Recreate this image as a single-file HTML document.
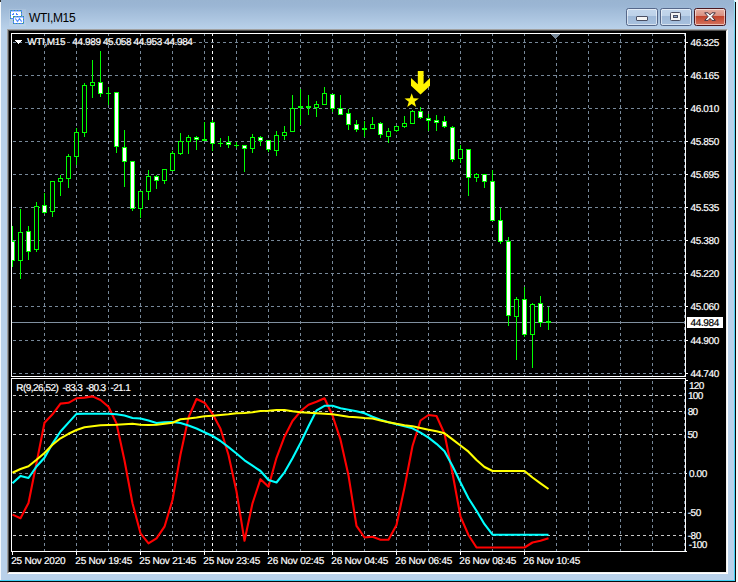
<!DOCTYPE html>
<html><head><meta charset="utf-8"><title>WTI,M15</title>
<style>
html,body{margin:0;padding:0;}
body{width:738px;height:582px;overflow:hidden;position:relative;background:#b9d1ea;font-family:"Liberation Sans",sans-serif;}
#win{position:absolute;left:0;top:0;width:738px;height:582px;overflow:hidden;}
#cap{position:absolute;left:0;top:0;width:735px;height:29px;background:linear-gradient(#99b4d1 0,#9bb6d4 20%,#b9d1ea 100%);}
#lft{position:absolute;left:0;top:0;width:1px;height:581px;background:#f4f8fc;}
#rcy{position:absolute;left:734px;top:1px;width:1px;height:580px;background:linear-gradient(#9be3f8 0,#5fd2f2 40px,#3fd0f5 100%);}
#rbk{position:absolute;left:735px;top:2px;width:1px;height:580px;background:#0a0a0a;}
#rwh{position:absolute;left:736px;top:0;width:2px;height:582px;background:#f6f6f6;}
#rtc{position:absolute;left:734px;top:0;width:2px;height:2px;background:#dff3fb;}
#bcy{position:absolute;left:0;top:580px;width:735px;height:1px;background:#3fd0f5;}
#bbk{position:absolute;left:0;top:581px;width:736px;height:1px;background:#0a0a0a;}
#edge{position:absolute;left:7px;top:29px;width:719px;height:543px;border-top:1px solid #a0a0a0;border-left:1px solid #a0a0a0;border-right:1px solid #fff;border-bottom:1px solid #fff;}
#edge2{position:absolute;left:8px;top:30px;width:717px;height:541px;border-top:1px solid #505050;border-left:1px solid #505050;border-right:1px solid #f0f0f0;border-bottom:1px solid #f0f0f0;background:#000;}
#chart{position:absolute;left:0;top:0;}
#ttl{position:absolute;left:29px;top:11px;font-size:12px;line-height:14px;color:#000;letter-spacing:-0.35px;white-space:nowrap;}
.btn{position:absolute;top:8px;height:16px;border:1px solid #56688a;border-radius:2.5px;box-shadow:inset 0 0 0 1px rgba(255,255,255,.55);}
#bmin,#bmax{background:linear-gradient(#c3d6ec 0,#bdd2e9 43%,#9fb9d8 46%,#a8c1de 100%);}
#bmin{left:626px;width:30px;}
#bmax{left:660px;width:30px;}
#bcls{left:694px;width:30px;border-color:#4b1820;background:linear-gradient(#e6b1a4 0,#d98f80 43%,#c2432b 46%,#d4745f 100%);}
.g{position:absolute;box-sizing:border-box;}
#corner{position:absolute;left:0;top:0;width:1px;height:2px;background:#333;}
</style></head><body>
<div id="win">
<div id="cap"></div>
<div id="lft"></div><div id="corner"></div>
<div id="rwh"></div><div id="rtc"></div><div id="rcy"></div><div id="rbk"></div><div id="bcy"></div><div id="bbk"></div>
<svg style="position:absolute;left:9px;top:9px" width="17" height="17" viewBox="9 9 17 17" shape-rendering="crispEdges">
<rect x="9" y="9" width="17" height="17" fill="#fff" opacity=".10"/>
<rect x="10.5" y="10.5" width="11" height="8" fill="#fff" stroke="#4c88ff"/>
<rect x="10.5" y="10.5" width="11" height="8" fill="none" stroke="#3f9f7c" stroke-dasharray="1 2"/>
<rect x="12" y="14" width="2" height="1" fill="#4c88ff"/><rect x="13" y="13" width="1" height="1" fill="#4c88ff"/>
<rect x="16" y="14" width="2" height="1" fill="#4c88ff"/><rect x="16" y="13" width="1" height="1" fill="#4c88ff"/>
<rect x="11" y="11" width="10" height="1" fill="#4c88ff" opacity=".45"/>
<rect x="13.5" y="16.5" width="10" height="7" fill="#fff" stroke="#4c88ff"/>
<rect x="14" y="17" width="9" height="1" fill="#4c88ff" opacity=".45"/>
<rect x="13.5" y="16.5" width="10" height="7" fill="none" stroke="#3f9f7c" stroke-dasharray="1 2"/>
<polyline points="15.3,18.5 17.5,21.6 19.5,18.6 21.7,21.6" fill="none" stroke="#4c88ff" stroke-width="1.1" shape-rendering="geometricPrecision"/>
</svg>
<div id="ttl">WTI,M15</div>
<div class="btn" id="bmin"><div class="g" style="left:9px;top:7px;width:12px;height:5px;border:1px solid #4a4f63;border-radius:1px;background:#f4f4f4"></div></div>
<div class="btn" id="bmax"><div class="g" style="left:9px;top:3px;width:11px;height:9px;border:1px solid #4a4f63;border-radius:1.5px;background:#f4f4f4"></div><div class="g" style="left:12px;top:6px;width:5px;height:3px;border:1px solid #4a4f63;background:#8fa9cc"></div></div>
<div class="btn" id="bcls"><svg style="position:absolute;left:9px;top:3px" width="12" height="10" viewBox="0 0 12 10"><path d="M0.7 0.8 L4.1 0.8 L6 2.9 L7.9 0.8 L11.3 0.8 L8 4.6 L11.3 8.4 L7.9 8.4 L6 6.3 L4.1 8.4 L0.7 8.4 L4 4.6 Z" fill="#f6f6f6" stroke="#4a3540" stroke-width="1" stroke-linejoin="round"/></svg></div>
<div id="edge"></div><div id="edge2"></div>
<svg id="chart" width="738" height="582" viewBox="0 0 738 582" shape-rendering="crispEdges">
<rect x="9" y="31" width="717" height="541" fill="#000"/>
<g stroke="#778899" stroke-width="1" stroke-dasharray="3 3" fill="none">
<line x1="13" y1="42.5" x2="685" y2="42.5"/>
<line x1="13" y1="75.5" x2="685" y2="75.5"/>
<line x1="13" y1="108.5" x2="685" y2="108.5"/>
<line x1="13" y1="141.5" x2="685" y2="141.5"/>
<line x1="13" y1="174.5" x2="685" y2="174.5"/>
<line x1="13" y1="207.5" x2="685" y2="207.5"/>
<line x1="13" y1="240.5" x2="685" y2="240.5"/>
<line x1="13" y1="273.5" x2="685" y2="273.5"/>
<line x1="13" y1="306.5" x2="685" y2="306.5"/>
<line x1="13" y1="340.5" x2="685" y2="340.5"/>
<line x1="13" y1="373.5" x2="685" y2="373.5"/>
<line x1="13" y1="473.5" x2="685" y2="473.5"/>
<line x1="44.5" y1="33" x2="44.5" y2="551"/>
<line x1="76.5" y1="33" x2="76.5" y2="551"/>
<line x1="108.5" y1="33" x2="108.5" y2="551"/>
<line x1="140.5" y1="33" x2="140.5" y2="551"/>
<line x1="172.5" y1="33" x2="172.5" y2="551"/>
<line x1="204.5" y1="33" x2="204.5" y2="551"/>
<line x1="236.5" y1="33" x2="236.5" y2="551"/>
<line x1="268.5" y1="33" x2="268.5" y2="551"/>
<line x1="300.5" y1="33" x2="300.5" y2="551"/>
<line x1="332.5" y1="33" x2="332.5" y2="551"/>
<line x1="364.5" y1="33" x2="364.5" y2="551"/>
<line x1="396.5" y1="33" x2="396.5" y2="551"/>
<line x1="428.5" y1="33" x2="428.5" y2="551"/>
<line x1="460.5" y1="33" x2="460.5" y2="551"/>
<line x1="492.5" y1="33" x2="492.5" y2="551"/>
<line x1="524.5" y1="33" x2="524.5" y2="551"/>
<line x1="556.5" y1="33" x2="556.5" y2="551"/>
<line x1="588.5" y1="33" x2="588.5" y2="551"/>
<line x1="620.5" y1="33" x2="620.5" y2="551"/>
<line x1="652.5" y1="33" x2="652.5" y2="551"/>
<line x1="684.5" y1="33" x2="684.5" y2="551"/>
</g>
<line x1="13" y1="395.5" x2="685" y2="395.5" stroke="#c8c8c8" stroke-width="1" stroke-dasharray="3 3"/>
<line x1="13" y1="411.5" x2="685" y2="411.5" stroke="#c8c8c8" stroke-width="1" stroke-dasharray="3 3"/>
<line x1="13" y1="434.5" x2="685" y2="434.5" stroke="#c8c8c8" stroke-width="1" stroke-dasharray="3 3"/>
<line x1="13" y1="512.5" x2="685" y2="512.5" stroke="#c8c8c8" stroke-width="1" stroke-dasharray="3 3"/>
<line x1="13" y1="535.5" x2="685" y2="535.5" stroke="#c8c8c8" stroke-width="1" stroke-dasharray="3 3"/>
<line x1="212.5" y1="33" x2="212.5" y2="551" stroke="#ffffff" stroke-width="1" stroke-dasharray="3 3"/>
<rect x="12" y="322" width="673" height="1" fill="#8090a0"/>
<rect x="12" y="226" width="1" height="41" fill="#00ff00"/>
<rect x="10" y="241" width="5" height="20" fill="#00ff00"/>
<rect x="11" y="242" width="3" height="18" fill="#fff"/>
<rect x="20" y="209" width="1" height="70" fill="#00ff00"/>
<rect x="18" y="232" width="5" height="29" fill="#00ff00"/>
<rect x="19" y="233" width="3" height="27" fill="#000"/>
<rect x="28" y="226" width="1" height="34" fill="#00ff00"/>
<rect x="26" y="231" width="5" height="21" fill="#00ff00"/>
<rect x="27" y="232" width="3" height="19" fill="#fff"/>
<rect x="36" y="202" width="1" height="50" fill="#00ff00"/>
<rect x="34" y="206" width="5" height="44" fill="#00ff00"/>
<rect x="35" y="207" width="3" height="42" fill="#000"/>
<rect x="44" y="193" width="1" height="21" fill="#00ff00"/>
<rect x="42" y="205" width="5" height="8" fill="#00ff00"/>
<rect x="43" y="206" width="3" height="6" fill="#fff"/>
<rect x="52" y="181" width="1" height="36" fill="#00ff00"/>
<rect x="50" y="181" width="5" height="31" fill="#00ff00"/>
<rect x="51" y="182" width="3" height="29" fill="#000"/>
<rect x="60" y="175" width="1" height="21" fill="#00ff00"/>
<rect x="58" y="178" width="5" height="4" fill="#00ff00"/>
<rect x="59" y="179" width="3" height="2" fill="#000"/>
<rect x="68" y="154" width="1" height="34" fill="#00ff00"/>
<rect x="66" y="156" width="5" height="23" fill="#00ff00"/>
<rect x="67" y="157" width="3" height="21" fill="#000"/>
<rect x="76" y="128" width="1" height="37" fill="#00ff00"/>
<rect x="74" y="132" width="5" height="25" fill="#00ff00"/>
<rect x="75" y="133" width="3" height="23" fill="#000"/>
<rect x="84" y="83" width="1" height="54" fill="#00ff00"/>
<rect x="82" y="85" width="5" height="48" fill="#00ff00"/>
<rect x="83" y="86" width="3" height="46" fill="#000"/>
<rect x="92" y="60" width="1" height="38" fill="#00ff00"/>
<rect x="90" y="82" width="5" height="4" fill="#00ff00"/>
<rect x="91" y="83" width="3" height="2" fill="#000"/>
<rect x="100" y="51" width="1" height="46" fill="#00ff00"/>
<rect x="98" y="82" width="5" height="12" fill="#00ff00"/>
<rect x="99" y="83" width="3" height="10" fill="#fff"/>
<rect x="108" y="87" width="1" height="18" fill="#00ff00"/>
<rect x="106" y="93" width="5" height="1" fill="#00ff00"/>
<rect x="116" y="92" width="1" height="61" fill="#00ff00"/>
<rect x="114" y="92" width="5" height="55" fill="#00ff00"/>
<rect x="115" y="93" width="3" height="53" fill="#fff"/>
<rect x="124" y="130" width="1" height="57" fill="#00ff00"/>
<rect x="122" y="147" width="5" height="15" fill="#00ff00"/>
<rect x="123" y="148" width="3" height="13" fill="#fff"/>
<rect x="132" y="161" width="1" height="50" fill="#00ff00"/>
<rect x="130" y="161" width="5" height="48" fill="#00ff00"/>
<rect x="131" y="162" width="3" height="46" fill="#fff"/>
<rect x="140" y="191" width="1" height="27" fill="#00ff00"/>
<rect x="138" y="191" width="5" height="18" fill="#00ff00"/>
<rect x="139" y="192" width="3" height="16" fill="#000"/>
<rect x="148" y="170" width="1" height="30" fill="#00ff00"/>
<rect x="146" y="176" width="5" height="16" fill="#00ff00"/>
<rect x="147" y="177" width="3" height="14" fill="#000"/>
<rect x="156" y="175" width="1" height="14" fill="#00ff00"/>
<rect x="154" y="176" width="5" height="5" fill="#00ff00"/>
<rect x="155" y="177" width="3" height="3" fill="#fff"/>
<rect x="164" y="169" width="1" height="15" fill="#00ff00"/>
<rect x="162" y="169" width="5" height="12" fill="#00ff00"/>
<rect x="163" y="170" width="3" height="10" fill="#000"/>
<rect x="172" y="151" width="1" height="20" fill="#00ff00"/>
<rect x="170" y="153" width="5" height="18" fill="#00ff00"/>
<rect x="171" y="154" width="3" height="16" fill="#000"/>
<rect x="180" y="133" width="1" height="22" fill="#00ff00"/>
<rect x="178" y="141" width="5" height="13" fill="#00ff00"/>
<rect x="179" y="142" width="3" height="11" fill="#000"/>
<rect x="188" y="135" width="1" height="19" fill="#00ff00"/>
<rect x="186" y="137" width="5" height="5" fill="#00ff00"/>
<rect x="187" y="138" width="3" height="3" fill="#000"/>
<rect x="196" y="136" width="1" height="14" fill="#00ff00"/>
<rect x="194" y="137" width="5" height="3" fill="#00ff00"/>
<rect x="195" y="138" width="3" height="1" fill="#fff"/>
<rect x="204" y="122" width="1" height="19" fill="#00ff00"/>
<rect x="202" y="139" width="5" height="2" fill="#00ff00"/>
<rect x="212" y="120" width="1" height="31" fill="#00ff00"/>
<rect x="210" y="122" width="5" height="22" fill="#00ff00"/>
<rect x="211" y="123" width="3" height="20" fill="#fff"/>
<rect x="220" y="138" width="1" height="9" fill="#00ff00"/>
<rect x="218" y="143" width="5" height="1" fill="#00ff00"/>
<rect x="228" y="136" width="1" height="12" fill="#00ff00"/>
<rect x="226" y="142" width="5" height="3" fill="#00ff00"/>
<rect x="227" y="143" width="3" height="1" fill="#fff"/>
<rect x="236" y="142" width="1" height="6" fill="#00ff00"/>
<rect x="234" y="145" width="5" height="1" fill="#00ff00"/>
<rect x="244" y="145" width="1" height="27" fill="#00ff00"/>
<rect x="242" y="145" width="5" height="4" fill="#00ff00"/>
<rect x="243" y="146" width="3" height="2" fill="#fff"/>
<rect x="252" y="134" width="1" height="19" fill="#00ff00"/>
<rect x="250" y="137" width="5" height="12" fill="#00ff00"/>
<rect x="251" y="138" width="3" height="10" fill="#000"/>
<rect x="260" y="136" width="1" height="10" fill="#00ff00"/>
<rect x="258" y="137" width="5" height="4" fill="#00ff00"/>
<rect x="259" y="138" width="3" height="2" fill="#fff"/>
<rect x="268" y="140" width="1" height="12" fill="#00ff00"/>
<rect x="266" y="140" width="5" height="10" fill="#00ff00"/>
<rect x="267" y="141" width="3" height="8" fill="#fff"/>
<rect x="276" y="131" width="1" height="25" fill="#00ff00"/>
<rect x="274" y="135" width="5" height="16" fill="#00ff00"/>
<rect x="275" y="136" width="3" height="14" fill="#000"/>
<rect x="284" y="126" width="1" height="14" fill="#00ff00"/>
<rect x="282" y="132" width="5" height="4" fill="#00ff00"/>
<rect x="283" y="133" width="3" height="2" fill="#000"/>
<rect x="292" y="95" width="1" height="37" fill="#00ff00"/>
<rect x="290" y="108" width="5" height="24" fill="#00ff00"/>
<rect x="291" y="109" width="3" height="22" fill="#000"/>
<rect x="300" y="89" width="1" height="36" fill="#00ff00"/>
<rect x="298" y="106" width="5" height="2" fill="#00ff00"/>
<rect x="308" y="95" width="1" height="20" fill="#00ff00"/>
<rect x="306" y="106" width="5" height="2" fill="#00ff00"/>
<rect x="316" y="101" width="1" height="16" fill="#00ff00"/>
<rect x="314" y="104" width="5" height="4" fill="#00ff00"/>
<rect x="315" y="105" width="3" height="2" fill="#000"/>
<rect x="324" y="87" width="1" height="18" fill="#00ff00"/>
<rect x="322" y="93" width="5" height="12" fill="#00ff00"/>
<rect x="323" y="94" width="3" height="10" fill="#000"/>
<rect x="332" y="94" width="1" height="18" fill="#00ff00"/>
<rect x="330" y="94" width="5" height="15" fill="#00ff00"/>
<rect x="331" y="95" width="3" height="13" fill="#fff"/>
<rect x="340" y="95" width="1" height="20" fill="#00ff00"/>
<rect x="338" y="108" width="5" height="7" fill="#00ff00"/>
<rect x="339" y="109" width="3" height="5" fill="#fff"/>
<rect x="348" y="109" width="1" height="21" fill="#00ff00"/>
<rect x="346" y="113" width="5" height="12" fill="#00ff00"/>
<rect x="347" y="114" width="3" height="10" fill="#fff"/>
<rect x="356" y="120" width="1" height="12" fill="#00ff00"/>
<rect x="354" y="124" width="5" height="6" fill="#00ff00"/>
<rect x="355" y="125" width="3" height="4" fill="#fff"/>
<rect x="364" y="121" width="1" height="16" fill="#00ff00"/>
<rect x="362" y="128" width="5" height="2" fill="#00ff00"/>
<rect x="372" y="117" width="1" height="12" fill="#00ff00"/>
<rect x="370" y="124" width="5" height="5" fill="#00ff00"/>
<rect x="371" y="125" width="3" height="3" fill="#000"/>
<rect x="380" y="122" width="1" height="16" fill="#00ff00"/>
<rect x="378" y="123" width="5" height="12" fill="#00ff00"/>
<rect x="379" y="124" width="3" height="10" fill="#fff"/>
<rect x="388" y="128" width="1" height="15" fill="#00ff00"/>
<rect x="386" y="131" width="5" height="6" fill="#00ff00"/>
<rect x="387" y="132" width="3" height="4" fill="#000"/>
<rect x="396" y="126" width="1" height="6" fill="#00ff00"/>
<rect x="394" y="126" width="5" height="5" fill="#00ff00"/>
<rect x="395" y="127" width="3" height="3" fill="#000"/>
<rect x="404" y="116" width="1" height="12" fill="#00ff00"/>
<rect x="402" y="123" width="5" height="4" fill="#00ff00"/>
<rect x="403" y="124" width="3" height="2" fill="#000"/>
<rect x="412" y="110" width="1" height="14" fill="#00ff00"/>
<rect x="410" y="111" width="5" height="13" fill="#00ff00"/>
<rect x="411" y="112" width="3" height="11" fill="#000"/>
<rect x="420" y="107" width="1" height="12" fill="#00ff00"/>
<rect x="418" y="111" width="5" height="7" fill="#00ff00"/>
<rect x="419" y="112" width="3" height="5" fill="#fff"/>
<rect x="428" y="114" width="1" height="17" fill="#00ff00"/>
<rect x="426" y="118" width="5" height="3" fill="#00ff00"/>
<rect x="427" y="119" width="3" height="1" fill="#fff"/>
<rect x="436" y="115" width="1" height="16" fill="#00ff00"/>
<rect x="434" y="120" width="5" height="3" fill="#00ff00"/>
<rect x="435" y="121" width="3" height="1" fill="#fff"/>
<rect x="444" y="116" width="1" height="12" fill="#00ff00"/>
<rect x="442" y="121" width="5" height="6" fill="#00ff00"/>
<rect x="443" y="122" width="3" height="4" fill="#fff"/>
<rect x="452" y="126" width="1" height="36" fill="#00ff00"/>
<rect x="450" y="127" width="5" height="33" fill="#00ff00"/>
<rect x="451" y="128" width="3" height="31" fill="#fff"/>
<rect x="460" y="145" width="1" height="18" fill="#00ff00"/>
<rect x="458" y="149" width="5" height="10" fill="#00ff00"/>
<rect x="459" y="150" width="3" height="8" fill="#000"/>
<rect x="468" y="149" width="1" height="47" fill="#00ff00"/>
<rect x="466" y="149" width="5" height="29" fill="#00ff00"/>
<rect x="467" y="150" width="3" height="27" fill="#fff"/>
<rect x="476" y="173" width="1" height="9" fill="#00ff00"/>
<rect x="474" y="174" width="5" height="4" fill="#00ff00"/>
<rect x="475" y="175" width="3" height="2" fill="#000"/>
<rect x="484" y="174" width="1" height="14" fill="#00ff00"/>
<rect x="482" y="174" width="5" height="8" fill="#00ff00"/>
<rect x="483" y="175" width="3" height="6" fill="#fff"/>
<rect x="492" y="170" width="1" height="51" fill="#00ff00"/>
<rect x="490" y="181" width="5" height="40" fill="#00ff00"/>
<rect x="491" y="182" width="3" height="38" fill="#fff"/>
<rect x="500" y="208" width="1" height="36" fill="#00ff00"/>
<rect x="498" y="220" width="5" height="22" fill="#00ff00"/>
<rect x="499" y="221" width="3" height="20" fill="#fff"/>
<rect x="508" y="237" width="1" height="89" fill="#00ff00"/>
<rect x="506" y="241" width="5" height="75" fill="#00ff00"/>
<rect x="507" y="242" width="3" height="73" fill="#fff"/>
<rect x="516" y="297" width="1" height="63" fill="#00ff00"/>
<rect x="514" y="299" width="5" height="18" fill="#00ff00"/>
<rect x="515" y="300" width="3" height="16" fill="#000"/>
<rect x="524" y="287" width="1" height="50" fill="#00ff00"/>
<rect x="522" y="299" width="5" height="36" fill="#00ff00"/>
<rect x="523" y="300" width="3" height="34" fill="#fff"/>
<rect x="532" y="303" width="1" height="65" fill="#00ff00"/>
<rect x="530" y="304" width="5" height="31" fill="#00ff00"/>
<rect x="531" y="305" width="3" height="29" fill="#000"/>
<rect x="540" y="296" width="1" height="31" fill="#00ff00"/>
<rect x="538" y="303" width="5" height="20" fill="#00ff00"/>
<rect x="539" y="304" width="3" height="18" fill="#fff"/>
<rect x="548" y="307" width="1" height="23" fill="#00ff00"/>
<rect x="546" y="321" width="5" height="2" fill="#00ff00"/>
<rect x="9" y="34" width="2" height="520" fill="#000"/>
<rect x="9" y="377" width="717" height="1" fill="#000"/>
<g fill="none" stroke="#fff" stroke-width="1">
<rect x="11.5" y="33.5" width="674" height="343"/>
<rect x="11.5" y="378.5" width="674" height="173"/>
</g>
<rect x="686" y="42" width="2" height="1" fill="#fff"/>
<rect x="686" y="75" width="2" height="1" fill="#fff"/>
<rect x="686" y="108" width="2" height="1" fill="#fff"/>
<rect x="686" y="141" width="2" height="1" fill="#fff"/>
<rect x="686" y="174" width="2" height="1" fill="#fff"/>
<rect x="686" y="207" width="2" height="1" fill="#fff"/>
<rect x="686" y="240" width="2" height="1" fill="#fff"/>
<rect x="686" y="273" width="2" height="1" fill="#fff"/>
<rect x="686" y="306" width="2" height="1" fill="#fff"/>
<rect x="686" y="340" width="2" height="1" fill="#fff"/>
<rect x="686" y="373" width="2" height="1" fill="#fff"/>
<rect x="686" y="380" width="2" height="1" fill="#fff"/>
<rect x="686" y="473" width="1" height="1" fill="#fff"/>
<rect x="686" y="551" width="1" height="1" fill="#fff"/>
<rect x="12" y="552" width="1" height="3" fill="#fff"/>
<rect x="76" y="552" width="1" height="3" fill="#fff"/>
<rect x="140" y="552" width="1" height="3" fill="#fff"/>
<rect x="204" y="552" width="1" height="3" fill="#fff"/>
<rect x="268" y="552" width="1" height="3" fill="#fff"/>
<rect x="332" y="552" width="1" height="3" fill="#fff"/>
<rect x="396" y="552" width="1" height="3" fill="#fff"/>
<rect x="460" y="552" width="1" height="3" fill="#fff"/>
<rect x="524" y="552" width="1" height="3" fill="#fff"/>
<clipPath id="sub"><rect x="12" y="379" width="673" height="172"/></clipPath>
<g clip-path="url(#sub)">
<polyline points="12.5,514.6 20.5,518.2 28.5,503.0 36.5,463.0 44.5,422.8 52.5,414.3 60.5,403.6 68.5,402.8 76.5,398.3 84.5,397.6 92.5,396.4 100.5,400.0 108.5,406.8 116.5,423.5 124.5,460.5 132.5,503.3 140.5,533.3 148.5,543.3 156.5,538.3 164.5,526.7 172.5,500.0 180.5,454.5 188.5,417.5 196.5,399.0 204.5,402.7 212.5,413.8 220.5,428.8 228.5,455.0 236.5,491.5 244.5,540.8 252.5,503.3 260.5,479.2 268.5,486.7 276.5,457.8 284.5,436.7 292.5,421.0 300.5,411.3 308.5,404.7 316.5,401.7 324.5,398.3 332.5,415.5 340.5,439.7 348.5,475.5 356.5,525.8 364.5,537.5 372.5,536.7 380.5,539.7 388.5,539.7 396.5,525.0 404.5,487.5 412.5,446.0 420.5,420.5 428.5,415.0 436.5,416.0 444.5,433.8 452.5,473.2 460.5,516.7 468.5,535.0 476.5,547.5 484.5,547.5 492.5,547.5 500.5,547.5 508.5,547.5 516.5,547.5 524.5,547.5 532.5,542.5 540.5,540.8 548.5,538.3" fill="none" stroke="#ff0000" stroke-width="2.1" stroke-linejoin="round" shape-rendering="geometricPrecision"/>
<polyline points="12.5,483.3 20.5,475.9 28.5,478.0 36.5,466.5 44.5,457.7 52.5,443.6 60.5,431.5 68.5,422.6 76.5,413.9 84.5,413.8 92.5,413.8 100.5,413.8 108.5,413.8 116.5,414.3 124.5,415.5 132.5,418.0 140.5,418.5 148.5,420.5 156.5,423.0 164.5,422.3 172.5,422.0 180.5,423.0 188.5,425.5 196.5,428.5 204.5,432.2 212.5,436.0 220.5,441.0 228.5,447.2 236.5,453.5 244.5,460.3 252.5,465.7 260.5,471.0 268.5,480.0 276.5,482.5 284.5,472.3 292.5,458.2 300.5,443.0 308.5,426.3 316.5,410.5 324.5,405.8 332.5,405.8 340.5,408.3 348.5,409.7 356.5,411.3 364.5,413.3 372.5,416.7 380.5,419.7 388.5,422.2 396.5,424.3 404.5,426.3 412.5,428.3 420.5,432.7 428.5,437.7 436.5,443.8 444.5,451.3 452.5,466.0 460.5,482.5 468.5,498.3 476.5,510.8 484.5,524.2 492.5,534.7 500.5,534.7 508.5,534.7 516.5,534.7 524.5,534.7 532.5,534.7 540.5,534.7 548.5,534.7" fill="none" stroke="#00ffff" stroke-width="2.1" stroke-linejoin="round" shape-rendering="geometricPrecision"/>
<polyline points="12.5,472.8 20.5,469.0 28.5,466.2 36.5,459.8 44.5,453.0 52.5,444.7 60.5,438.3 68.5,433.8 76.5,430.0 84.5,427.2 92.5,426.3 100.5,425.3 108.5,425.0 116.5,424.7 124.5,424.2 132.5,423.8 140.5,424.7 148.5,425.0 156.5,424.8 164.5,423.8 172.5,422.7 180.5,419.3 188.5,418.5 196.5,417.5 204.5,416.3 212.5,415.7 220.5,415.0 228.5,414.3 236.5,413.3 244.5,413.0 252.5,412.2 260.5,411.0 268.5,410.7 276.5,410.0 284.5,410.0 292.5,411.3 300.5,412.2 308.5,412.7 316.5,413.3 324.5,413.8 332.5,414.3 340.5,415.5 348.5,416.7 356.5,417.3 364.5,418.0 372.5,418.5 380.5,420.5 388.5,422.2 396.5,423.8 404.5,425.2 412.5,426.3 420.5,428.0 428.5,429.7 436.5,431.3 444.5,433.3 452.5,439.3 460.5,445.5 468.5,451.7 476.5,460.0 484.5,467.0 492.5,471.0 500.5,471.0 508.5,471.0 516.5,471.0 524.5,471.0 532.5,477.5 540.5,483.3 548.5,489.0" fill="none" stroke="#ffff00" stroke-width="2.1" stroke-linejoin="round" shape-rendering="geometricPrecision"/>
</g>
<rect x="687" y="317" width="36" height="11" fill="#fff"/>
<rect x="551" y="34" width="9" height="1" fill="#778899"/>
<rect x="552" y="35" width="7" height="1" fill="#778899"/>
<rect x="553" y="36" width="5" height="1" fill="#778899"/>
<rect x="554" y="37" width="3" height="1" fill="#778899"/>
<rect x="555" y="38" width="1" height="1" fill="#778899"/>
<rect x="15" y="40" width="7" height="1" fill="#fff"/>
<rect x="16" y="41" width="5" height="1" fill="#fff"/>
<rect x="17" y="42" width="3" height="1" fill="#fff"/>
<rect x="18" y="43" width="1" height="1" fill="#fff"/>
<g fill="#fff400" shape-rendering="geometricPrecision">
<polygon points="417.8,71 423.6,71 423.6,84.2 430,78 430,85.7 420.5,94.6 411,85.7 411,78 417.8,84.2"/>
<polygon points="411.7,93.2 413.5,98.3 418.9,98.5 414.6,101.8 416.2,106.9 411.7,103.9 407.2,106.9 408.8,101.8 404.5,98.5 409.9,98.3"/>
</g>
<g font-family="Liberation Sans, sans-serif" font-size="10" fill="#fff" stroke="#fff" stroke-width="0.2" text-rendering="geometricPrecision" shape-rendering="geometricPrecision">
<text x="690.6" y="46" textLength="28.6" lengthAdjust="spacing">46.325</text>
<text x="690.6" y="79" textLength="28.6" lengthAdjust="spacing">46.165</text>
<text x="690.6" y="112" textLength="28.6" lengthAdjust="spacing">46.010</text>
<text x="690.6" y="145" textLength="28.6" lengthAdjust="spacing">45.850</text>
<text x="690.6" y="178" textLength="28.6" lengthAdjust="spacing">45.695</text>
<text x="690.6" y="211" textLength="28.6" lengthAdjust="spacing">45.535</text>
<text x="690.6" y="244" textLength="28.6" lengthAdjust="spacing">45.380</text>
<text x="690.6" y="277" textLength="28.6" lengthAdjust="spacing">45.220</text>
<text x="690.6" y="310" textLength="28.6" lengthAdjust="spacing">45.060</text>
<text x="690.6" y="344" textLength="28.6" lengthAdjust="spacing">44.900</text>
<text x="690.6" y="377" textLength="28.6" lengthAdjust="spacing">44.740</text>
<text x="690.6" y="326" textLength="28.6" lengthAdjust="spacing" fill="#000" stroke="#000">44.984</text>
<text x="689.0" y="389" textLength="15.2" lengthAdjust="spacing">120</text>
<text x="688.0" y="399" textLength="15.2" lengthAdjust="spacing">100</text>
<text x="687.7" y="415" textLength="10.4" lengthAdjust="spacing">80</text>
<text x="687.5" y="438" textLength="10.4" lengthAdjust="spacing">50</text>
<text x="689.0" y="477" textLength="18.2" lengthAdjust="spacing">0.00</text>
<text x="687.8" y="516" textLength="13.4" lengthAdjust="spacing">-50</text>
<text x="687.8" y="539" textLength="13.4" lengthAdjust="spacing">-80</text>
<text x="688.8" y="548" textLength="18.6" lengthAdjust="spacing">-100</text>
<text x="27.3" y="45" textLength="38.2" lengthAdjust="spacing">WTI,M15</text>
<text x="72.3" y="45" textLength="28.7" lengthAdjust="spacing">44.989</text>
<text x="102.9" y="45" textLength="28.7" lengthAdjust="spacing">45.058</text>
<text x="133.5" y="45" textLength="28.7" lengthAdjust="spacing">44.953</text>
<text x="164.2" y="45" textLength="28.7" lengthAdjust="spacing">44.984</text>
<text x="16.2" y="391" textLength="42.6" lengthAdjust="spacing">R(9,26,52)</text>
<text x="62.6" y="391" textLength="20.2" lengthAdjust="spacing">-83.3</text>
<text x="85.9" y="391" textLength="20.2" lengthAdjust="spacing">-80.3</text>
<text x="110.5" y="391" textLength="20.2" lengthAdjust="spacing">-21.1</text>
<text x="11.3" y="564" textLength="54.2" lengthAdjust="spacing">25 Nov 2020</text>
<text x="75.3" y="564" textLength="57" lengthAdjust="spacing">25 Nov 19:45</text>
<text x="139.3" y="564" textLength="57" lengthAdjust="spacing">25 Nov 21:45</text>
<text x="203.3" y="564" textLength="57" lengthAdjust="spacing">25 Nov 23:45</text>
<text x="267.3" y="564" textLength="57" lengthAdjust="spacing">26 Nov 02:45</text>
<text x="331.3" y="564" textLength="57" lengthAdjust="spacing">26 Nov 04:45</text>
<text x="395.3" y="564" textLength="57" lengthAdjust="spacing">26 Nov 06:45</text>
<text x="459.3" y="564" textLength="57" lengthAdjust="spacing">26 Nov 08:45</text>
<text x="523.3" y="564" textLength="57" lengthAdjust="spacing">26 Nov 10:45</text>
</g>
</svg>
</div>
</body></html>
